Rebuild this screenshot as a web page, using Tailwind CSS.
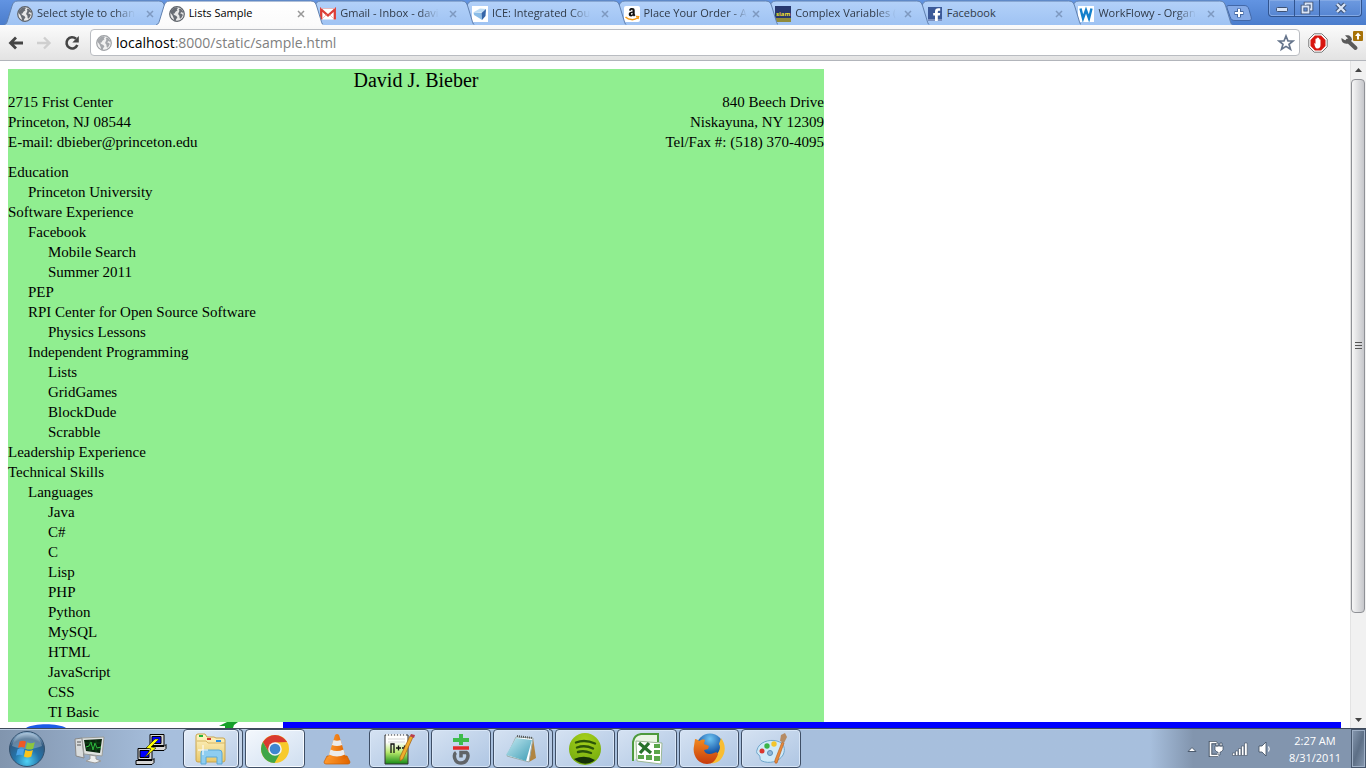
<!DOCTYPE html>
<html lang="en">
<head>
<meta charset="utf-8">
<title>Lists Sample</title>
<script src="https://cdn.jsdelivr.net/npm/@tailwindcss/browser@4"></script>
</head>
<body class="flex h-screen flex-col overflow-hidden bg-white font-['Open_Sans','Noto_Sans',sans-serif] text-black">

<svg class="absolute size-0" aria-hidden="true">
  <defs>
    <linearGradient id="tabFill" x1="0" y1="0" x2="0" y2="1"><stop offset="0" stop-color="#b3d1f9"/><stop offset="1" stop-color="#9fc3f3"/></linearGradient>
    <linearGradient id="activeFill" x1="0" y1="0" x2="0" y2="1"><stop offset="0" stop-color="#ffffff"/><stop offset="1" stop-color="#fbfbfb"/></linearGradient>
    <radialGradient id="orbFill" cx=".5" cy=".85" r=".8"><stop offset="0" stop-color="#4fd2f5"/><stop offset=".45" stop-color="#2474aa"/><stop offset=".8" stop-color="#315a80"/><stop offset="1" stop-color="#8fb0cd"/></radialGradient>
    <linearGradient id="folderFill" x1="0" y1="0" x2="0" y2="1"><stop offset="0" stop-color="#fff6c8"/><stop offset="1" stop-color="#e9c869"/></linearGradient>
    <linearGradient id="coneFill" x1="0" x2="1"><stop offset="0" stop-color="#ff9a2e"/><stop offset="1" stop-color="#e06500"/></linearGradient>
    <linearGradient id="nppFill" x1="0" y1="0" x2="0" y2="1"><stop offset=".25" stop-color="#ffffff"/><stop offset=".6" stop-color="#b6e86a"/><stop offset="1" stop-color="#168a16"/></linearGradient>
    <linearGradient id="padFill" x1="0" y1="0" x2="1" y2="1"><stop offset="0" stop-color="#c5eaf2"/><stop offset="1" stop-color="#3f9db5"/></linearGradient>
    <radialGradient id="spotFill" cx=".5" cy=".2" r=".9"><stop offset="0" stop-color="#a5cf1c"/><stop offset="1" stop-color="#6fa80c"/></radialGradient>
    <radialGradient id="foxGlobe" cx=".5" cy=".2" r=".8"><stop offset="0" stop-color="#6fc4f2"/><stop offset=".6" stop-color="#1d5fae"/><stop offset="1" stop-color="#0d2c6b"/></radialGradient>
    <linearGradient id="foxFill" x1="0" y1="0" x2="0" y2="1"><stop offset="0" stop-color="#f28a1f"/><stop offset="1" stop-color="#c63a0c"/></linearGradient>
    <symbol id="globe" viewBox="0 0 16 16"><circle cx="8" cy="8" r="7.3" fill="#e9e9e9" stroke="#5d6269" stroke-width="1.2"/><path fill="#686d74" d="M2 4.5 5 1.7l3-.5 1 1-1.3 1 .8 1-2 1.6-1 1.6-1.3.3 1 1.4 2.2.8 1 1.6-1.3 1.7-.6 2.5-1.3-.6-.5-2.8L3.400 9.300 1.400 6.700z"/><path fill="#686d74" d="m10.500 2.400 2 .8 2 3-1 .6-1.200-.8-1 1.500 2 .6.4 1.500-1.800 3-1.200-.4-.3-2.400-1.300-1.800.8-2 .6-1.300-.8-1z"/></symbol>
    <symbol id="close" viewBox="0 0 8 8"><path d="m1 1 6 6M7 1 1 7" stroke="currentColor" stroke-width="1.500" fill="none"/></symbol>
    <symbol id="tab" viewBox="0 0 168 25" preserveAspectRatio="none"><path d="M0 25c3-1 3-3 4-6l4-13c1-3 2-5 6-5h141c4 0 5 2 6 5l4 13c1 3 1 5 3 6" stroke="#5f7fae" stroke-width="1"/></symbol>
    <symbol id="amazon" viewBox="0 0 16 16"><rect width="16" height="16" rx="2" fill="#fff"/><path d="M5 4.500C5.200 2.500 6.500 2 8 2c2 0 2.700.8 2.700 2.600v3.200c0 .7.300 1 .7 1.400L10 10.500 9 9.500c-1.500 1.700-4.300 1-4.300-1.300 0-2 1.600-2.600 3.900-2.800 0-1.200 0-1.700-.7-1.700s-.8.500-1 1.100zm3.600 2.200c-1.200.1-1.700.5-1.700 1.400 0 1.200 1.700 1 1.700-.7z" fill="#111"/><path d="M1.500 11c3.500 3.200 8.500 3.400 12 1m-1.500-1.500 2.500.2-.6 2.300" fill="none" stroke="#f59a16" stroke-width="1.500"/></symbol>
  </defs>
</svg>

<!-- Tab strip -->
<header class="relative flex h-[25px] shrink-0 bg-linear-to-b from-[#6294e2] to-[#4b7dcc]">
  <nav aria-label="Tabs" class="ml-1 flex max-w-[1213px] min-w-0 flex-1 text-[11px] text-[#303a48]">
    <div class="relative z-[8] flex min-w-0 flex-1 items-center pt-0.5 pl-[13px]">
      <svg class="absolute top-0 left-0 h-[25px] w-[calc(100%+16px)]" fill="url(#tabFill)"><use href="#tab"/></svg>
      <button class="relative flex min-w-0 flex-1 items-center gap-1"><svg class="size-4 shrink-0"><use href="#globe"/></svg><span class="whitespace-nowrap mask-r-from-80% mask-r-to-100%">Select style to chan</span></button>
      <button aria-label="Close tab" class="relative p-0.5 text-[#7e99c0]"><svg class="size-2"><use href="#close"/></svg></button>
    </div>
    <div class="relative z-[9] flex min-w-0 flex-1 items-center pt-0.5 pl-[13px] text-black">
      <svg class="absolute top-0 left-0 h-[25px] w-[calc(100%+16px)]" fill="url(#activeFill)"><use href="#tab"/></svg>
      <button class="relative flex min-w-0 flex-1 items-center gap-1"><svg class="size-4 shrink-0"><use href="#globe"/></svg><span class="whitespace-nowrap">Lists Sample</span></button>
      <button aria-label="Close tab" class="relative p-0.5 text-[#989898]"><svg class="size-2"><use href="#close"/></svg></button>
    </div>
    <div class="relative z-[7] flex min-w-0 flex-1 items-center pt-0.5 pl-[13px]">
      <svg class="absolute top-0 left-0 h-[25px] w-[calc(100%+16px)]" fill="url(#tabFill)"><use href="#tab"/></svg>
      <button class="relative flex min-w-0 flex-1 items-center gap-1"><svg class="size-4 shrink-0" viewBox="0 0 16 16"><path fill="#fff" d="M0 2.500h16v11H0z"/><path d="M1.200 13.500V3.500L8 9.500l6.800-6v10" fill="none" stroke="#dc3d36" stroke-width="2.300"/><path d="M2 13l4.500-4.500M14 13 9.500 8.500M1 2.500h14" stroke="#e9a5a2" stroke-width=".7"/></svg><span class="whitespace-nowrap mask-r-from-80% mask-r-to-100%">Gmail - Inbox - davi</span></button>
      <button aria-label="Close tab" class="relative p-0.5 text-[#7e99c0]"><svg class="size-2"><use href="#close"/></svg></button>
    </div>
    <div class="relative z-[6] flex min-w-0 flex-1 items-center pt-0.5 pl-[13px]">
      <svg class="absolute top-0 left-0 h-[25px] w-[calc(100%+16px)]" fill="url(#tabFill)"><use href="#tab"/></svg>
      <button class="relative flex min-w-0 flex-1 items-center gap-1"><svg class="size-4 shrink-0" viewBox="0 0 16 16"><path fill="#fff" d="M0 0h16v16H0z"/><path d="m2 6 6-3.500L14 3l-4 3.500H2z" fill="#bcdcf5"/><path d="m1.500 6.500 8 .5.500 7-3-2-5-3z" fill="#8bbde8"/><path d="m9.500 7 4.500-4-.5 7L10 14z" fill="#3565a8"/></svg><span class="whitespace-nowrap mask-r-from-80% mask-r-to-100%">ICE: Integrated Cou</span></button>
      <button aria-label="Close tab" class="relative p-0.5 text-[#7e99c0]"><svg class="size-2"><use href="#close"/></svg></button>
    </div>
    <div class="relative z-[5] flex min-w-0 flex-1 items-center pt-0.5 pl-[13px]">
      <svg class="absolute top-0 left-0 h-[25px] w-[calc(100%+16px)]" fill="url(#tabFill)"><use href="#tab"/></svg>
      <button class="relative flex min-w-0 flex-1 items-center gap-1"><svg class="size-4 shrink-0"><use href="#amazon"/></svg><span class="whitespace-nowrap mask-r-from-85% mask-r-to-100%">Place Your Order - A</span></button>
      <button aria-label="Close tab" class="relative p-0.5 text-[#7e99c0]"><svg class="size-2"><use href="#close"/></svg></button>
    </div>
    <div class="relative z-[4] flex min-w-0 flex-1 items-center pt-0.5 pl-[13px]">
      <svg class="absolute top-0 left-0 h-[25px] w-[calc(100%+16px)]" fill="url(#tabFill)"><use href="#tab"/></svg>
      <button class="relative flex min-w-0 flex-1 items-center gap-1"><span class="flex size-4 shrink-0 items-center justify-center bg-linear-to-b from-[#27376d] from-75% to-[#8f8a3a] to-75% text-[6px] leading-3 font-bold text-[#f0df2a]">siam</span><span class="whitespace-nowrap mask-r-from-80% mask-r-to-100%">Complex Variables (</span></button>
      <button aria-label="Close tab" class="relative p-0.5 text-[#7e99c0]"><svg class="size-2"><use href="#close"/></svg></button>
    </div>
    <div class="relative z-[3] flex min-w-0 flex-1 items-center pt-0.5 pl-[13px]">
      <svg class="absolute top-0 left-0 h-[25px] w-[calc(100%+16px)]" fill="url(#tabFill)"><use href="#tab"/></svg>
      <button class="relative flex min-w-0 flex-1 items-center gap-1"><svg class="size-4 shrink-0" viewBox="0 0 16 16"><path fill="#3b5998" d="M1 1h14v14H1z"/><path fill="#7b90bf" d="M1 13h14v2H1z"/><path fill="#fff" d="M8 15V9.500H6.200V7H8V5.500C8 3.200 9.300 2.200 11.200 2.200h2v2.500H12c-.9 0-1.200.4-1.200 1.200V7h2.400l-.4 2.500h-2V15z"/></svg><span class="whitespace-nowrap">Facebook</span></button>
      <button aria-label="Close tab" class="relative p-0.5 text-[#7e99c0]"><svg class="size-2"><use href="#close"/></svg></button>
    </div>
    <div class="relative z-[2] flex min-w-0 flex-1 items-center pt-0.5 pl-[13px]">
      <svg class="absolute top-0 left-0 h-[25px] w-[calc(100%+16px)]" fill="url(#tabFill)"><use href="#tab"/></svg>
      <button class="relative flex min-w-0 flex-1 items-center gap-1"><svg class="size-4 shrink-0" viewBox="0 0 16 16"><path fill="#fff" d="M0 0h16v16H0z"/><path d="m2.500 2.500 2.500 10L8 4l3 8.500 2.500-10" fill="none" stroke="#1480cb" stroke-width="2.400"/></svg><span class="whitespace-nowrap mask-r-from-80% mask-r-to-100%">WorkFlowy - Organ</span></button>
      <button aria-label="Close tab" class="relative p-0.5 text-[#7e99c0]"><svg class="size-2"><use href="#close"/></svg></button>
    </div>
  </nav>
  <button aria-label="New tab" class="mt-[5px] ml-[9px] h-4 w-[26px] shrink-0"><svg viewBox="0 0 26 16" class="h-4 w-[26px]"><path d="M3 .5h15c3 0 4 1 5 4l2 7c1 3 0 4-2 4H9c-3 0-4-1-5-4L1 3C.5 1 1 .5 3 .5z" fill="#84a9e6" stroke="#4268a8"/><path d="M13 3.500v9M8.500 8h9" stroke="#46689f" stroke-width="4"/><path d="M13 4v8M9 8h8" stroke="#fff" stroke-width="2"/></svg></button>
  <div class="mr-1 ml-auto flex h-[17px] shrink-0 divide-x divide-[#31548f] rounded-b border border-t-0 border-[#31548f] bg-linear-to-b from-[#6d9ae0] to-[#5585d2] shadow-[inset_0_0_0_1px_#83a9e5]">
    <button aria-label="Minimize" class="flex w-[26px] items-center justify-center"><svg class="h-3 w-4" viewBox="0 0 16 12"><rect x="2.500" y="5.500" width="11" height="4" rx="1" fill="#d9e5f8" stroke="#3d5174"/></svg></button>
    <button aria-label="Restore" class="flex w-[25px] items-center justify-center"><svg class="size-[14px]" viewBox="0 0 14 14" fill="none"><path d="M5.500 4V2.500h6v6H10M2.500 5.500h6v6h-6z" stroke="#3d5174" stroke-width="3.600"/><path d="M5.500 4V2.500h6v6H10M2.500 5.500h6v6h-6z" stroke="#d9e5f8" stroke-width="1.800"/></svg></button>
    <button aria-label="Close" class="flex w-[41px] items-center justify-center"><svg class="h-3 w-4" viewBox="0 0 16 12"><path d="m4 2 8 8M12 2 4 10" stroke="#3d5174" stroke-width="4.500"/><path d="m4 2 8 8M12 2 4 10" stroke="#d9e5f8" stroke-width="2.400"/></svg></button>
  </div>
</header>

<!-- Toolbar -->
<div class="flex h-9 shrink-0 items-center border-b border-[#b2b5bb] bg-linear-to-b from-[#fbfbfb] to-[#e3e3e3] pr-0.5 pl-2">
  <button aria-label="Back" class="mr-3 w-4"><svg class="size-4" viewBox="0 0 16 16" fill="none" stroke="#454545" stroke-width="2.800"><path d="M2.500 8H15M8 2.500 2.500 8 8 13.500"/></svg></button>
  <button aria-label="Forward" class="mr-3 w-4"><svg class="size-4" viewBox="0 0 16 16" fill="none" stroke="#cfcfcf" stroke-width="2.400"><path d="M13.500 8H1M8 2.500 13.500 8 8 13.500"/></svg></button>
  <button aria-label="Reload" class="mr-2.5 w-4"><svg class="size-4" viewBox="0 0 16 16"><path d="M12 3.800A5.600 5.600 0 1 0 13.300 10" fill="none" stroke="#454545" stroke-width="2.600"/><path d="M14.800 1v6.500H8.300z" fill="#454545"/></svg></button>
  <label class="flex h-[27px] min-w-0 flex-1 items-center gap-1 rounded border border-[#b9bcc1] bg-white pr-1 pl-[5px]">
    <svg class="size-4 shrink-0 opacity-60"><use href="#globe"/></svg>
    <span class="relative min-w-0 flex-1 text-sm leading-5">
      <input aria-label="Address" value="localhost:8000/static/sample.html" class="block w-full text-[#808080] outline-none">
      <span aria-hidden="true" class="pointer-events-none absolute top-0 left-0 bg-white">localhost</span>
    </span>
    <svg class="size-[18px] shrink-0" viewBox="0 0 18 18"><path d="m9 2 2 5h5l-4 3.300 1.500 5L9 12.400l-4.500 2.900 1.500-5L2 7h5z" fill="#fff" stroke="#66758c" stroke-width="1.700"/></svg>
  </label>
  <button aria-label="AdBlock" class="ml-2 w-5"><svg class="size-5" viewBox="0 0 20 20"><path d="M6.200.8h7.600l5.400 5.400v7.600l-5.400 5.400H6.200L.8 13.800V6.200z" fill="#fff" stroke="#777"/><path d="M6.900 2.500h6.200l4.400 4.400v6.200l-4.400 4.400H6.900l-4.400-4.400V6.900z" fill="#d8160f"/><path d="M6.200 10.500c.6-.4 1.100 0 1.300.6V6c0-.8 1.100-.8 1.200 0V5c.1-.8 1.200-.8 1.200 0v.3c.2-.7 1.300-.6 1.300.2V6.600c.3-.6 1.300-.5 1.300.3V12c0 2.200-1 3.500-3 3.500-1.700 0-2.400-1-3.300-5z" fill="#fff"/></svg></button>
  <button aria-label="Settings" class="ml-3 w-6"><svg class="h-6 w-6" viewBox="0 0 24 24"><path d="m7.500 9.500 8 7.500" stroke="#5a5a5a" stroke-width="4" stroke-linecap="round"/><path d="M5 4.500 8.200 7.500 7 9.500 4.500 9 1.500 7C1 11 4 13.500 8 12.500l4-3.500c0-3.500-3-5.800-7-4.500z" fill="#5a5a5a"/><rect x="13" y="0" width="10" height="10" rx="1" fill="#a77208"/><path d="M18 1.500 21 5h-2v3.500h-2V5h-2z" fill="#fff"/></svg></button>
</div>

<!-- Web page -->
<div class="flex min-h-0 flex-1 bg-white">
  <main id="page" class="flex min-w-0 flex-1 flex-col overflow-hidden pt-2 font-['Liberation_Serif',serif]">
    <article class="ml-2 min-h-0 w-[816px] max-w-full flex-1 bg-[#90ee90] text-[15px] leading-5">
      <h1 class="text-center text-xl leading-[23px]">David J. Bieber</h1>
      <div class="flex justify-between">
        <address class="not-italic">2715 Frist Center<br>Princeton, NJ 08544<br>E-mail: dbieber@princeton.edu</address>
        <address class="text-right not-italic">840 Beech Drive<br>Niskayuna, NY 12309<br>Tel/Fax #: (518) 370-4095</address>
      </div>
      <ul class="mt-2.5">
        <li>Education
          <ul class="pl-5"><li>Princeton University</li></ul></li>
        <li>Software Experience
          <ul class="pl-5">
            <li>Facebook
              <ul class="pl-5"><li>Mobile Search</li><li>Summer 2011</li></ul></li>
            <li>PEP</li>
            <li>RPI Center for Open Source Software
              <ul class="pl-5"><li>Physics Lessons</li></ul></li>
            <li>Independent Programming
              <ul class="pl-5"><li>Lists</li><li>GridGames</li><li>BlockDude</li><li>Scrabble</li></ul></li>
          </ul></li>
        <li>Leadership Experience</li>
        <li>Technical Skills
          <ul class="pl-5">
            <li>Languages
              <ul class="pl-5"><li>Java</li><li>C#</li><li>C</li><li>Lisp</li><li>PHP</li><li>Python</li><li>MySQL</li><li>HTML</li><li>JavaScript</li><li>CSS</li><li>TI Basic</li></ul></li>
          </ul></li>
      </ul>
    </article>
    <div class="flex h-1.5 shrink-0 pr-[9px]">
      <svg class="h-1.5 w-[283px] shrink-0" viewBox="0 0 283 6"><path d="M26 6c8-5 32-5 40 0z" fill="#1d5be8"/><path d="m219 4 8-4h11l-4 3-1 3h-8v-2z" fill="#16a02a"/></svg>
      <div class="flex-1 bg-[#0000ff]"></div>
    </div>
  </main>
  <div class="flex w-4 shrink-0 flex-col border-l border-[#e3e3e3] bg-[#f1f1f1] pr-px" role="scrollbar" aria-controls="page" aria-valuenow="0">
    <button aria-label="Scroll up" class="flex h-[18px] shrink-0 items-center justify-center"><svg class="h-1 w-[7px]" viewBox="0 0 7 4"><path d="M0 4 3.500 0 7 4z" fill="#444"/></svg></button>
    <div class="flex h-4/5 items-center justify-center rounded-sm border border-[#8f9196] bg-linear-to-r from-[#f7f7f7] to-[#c6c7cb]">
      <svg class="size-[7px]" viewBox="0 0 7 7"><path d="M0 .5h7M0 3.500h7M0 6.500h7" stroke="#555"/></svg>
    </div>
    <button aria-label="Scroll down" class="mt-auto flex h-[17px] shrink-0 items-center justify-center"><svg class="h-1 w-[7px]" viewBox="0 0 7 4"><path d="M0 0h7L3.500 4z" fill="#444"/></svg></button>
  </div>
</div>

<!-- Taskbar -->
<footer class="flex h-10 shrink-0 border-t border-[#3f4a5a] bg-linear-to-r from-[#8195ae] from-0% via-[#a7bfdd] via-12% to-[#a7bfdd] to-85% shadow-[inset_0_1px_0_#b9cbe2]">
  <button aria-label="Start" class="flex w-[59px] shrink-0 items-center pl-2"><svg class="size-[38px]" viewBox="0 0 38 38"><circle cx="19" cy="19" r="17.500" fill="url(#orbFill)" stroke="#32506d"/><path d="M4 16C6 6 13 3 19 3s13 3 15 13c-9 4-21 4-30 0z" fill="#fff" opacity=".25"/><path d="M11.500 11.500c2.500-1.300 4.700-1 6.500 0l-1.500 6.300c-2-1-4-1-6.500 0z" fill="#ee5a24"/><path d="M19.200 12.200c2.500 1.300 5 1.200 7.600 0l-1.600 6.500c-2.500 1.200-5 1.200-7.500 0z" fill="#8cc63f"/><path d="M9.600 19.200c2.500-1.200 4.500-1 6.600 0l-1.500 6.300c-2-1-4.200-1-6.600 0z" fill="#4aa3e8"/><path d="M17.400 20c2.500 1.300 5 1.200 7.500 0l-1.600 6.500c-2.500 1.200-5 1.200-7.400 0z" fill="#fcc419"/></svg></button>
  <nav aria-label="Taskbar" class="flex min-w-0 gap-0.5 overflow-hidden">
    <button aria-label="System monitor" class="flex w-[60px] shrink-0 items-center justify-center"><svg class="size-8" viewBox="0 0 32 32"><path d="m2 6 7-1 2 20-8-2z" fill="#d9dcdc" stroke="#888"/><path d="M4 9h4M4 12h4" stroke="#555"/><path d="M9 5 31 4l-2 19-18-2z" fill="#dfe2e0" stroke="#9a9d9a"/><path d="m11 7 18-1-2 14-14-2z" fill="#09240d"/><path d="m13 14 3-1 2-4 2 8 2-7 2 5 4-1" fill="none" stroke="#32c943"/><path d="M12 10h16M13 16h15M17 7v11M23 7v12" stroke="#176923" stroke-width=".5"/><path d="m17 22 6 1v3l5 2-6 2-9-2 4-2z" fill="#eceeed" stroke="#999"/></svg></button>
    <button aria-label="PuTTY" class="flex w-[60px] shrink-0 items-center justify-center"><svg class="size-8" viewBox="0 0 32 32"><g id="pc" stroke="#000"><path d="M15 1.500h14v11H15z" fill="#d5d5d5"/><path d="M17 3.500h9v7h-9z" fill="#00f"/><path d="M13 13.500h16l2-2v4l-2 2H13z" fill="#d5d5d5"/></g><use href="#pc" x="-12" y="14"/><path d="m20 6-9 9 5 1-7 9 12-10-5-1 8-8z" fill="#ff0" stroke="#000" stroke-width=".5"/></svg></button>
    <div class="flex w-[60px] shrink-0">
      <button aria-label="Explorer" class="flex w-14 items-center justify-center rounded-sm border border-[#3f4f66] bg-linear-to-br from-[#e4edf8] to-[#b8cce6] shadow-[inset_0_0_0_1px_#eaf2fc]"><svg class="size-8" viewBox="0 0 32 32"><path d="M1 3q0-2 2-2h7l2 3h7l2 1h7q2 0 2 2v20q0 2-2 2H3q-2 0-2-2z" fill="url(#folderFill)" stroke="#c9a44c"/><path d="M4 2h4v2H4z" fill="#23b33a"/><path d="M12 5h4v2h-4z" fill="#d5342c"/><path d="M21 7h5v2h-5z" fill="#2c8ee0"/><path d="M2 8h9l2 2h17" fill="none" stroke="#d7b663"/><path d="M6 31V20q0-3 3-3h15q3 0 3 3v11h-5v-7H11v7z" fill="#8ecdf0" stroke="#5ba8d6"/><path d="M8 12v10M3 17h10" stroke="#fff"/></svg></button>
      <span class="w-1 rounded-r-sm border border-l-0 border-[#3f4f66] bg-[#c4d4e9]"></span>
    </div>
    <button aria-label="Chrome" class="flex w-[60px] shrink-0 items-center justify-center rounded-sm border border-[#3f4f66] bg-linear-to-br from-[#f4f8fd] to-[#cfdef0] shadow-[inset_0_0_0_1px_#f7fbff]"><svg class="size-[30px]" viewBox="0 0 30 30"><circle cx="15" cy="15" r="14" fill="#f7ca2c"/><path d="M2.900 8A14 14 0 0 1 27.100 8L15 8.500 9 18.500z" fill="#d93a30"/><path d="M2.900 8A14 14 0 0 0 14.500 29l6-10.500H9z" fill="#3fa648"/><circle cx="15" cy="15" r="6.800" fill="#f4f4f4"/><circle cx="15" cy="15" r="5.300" fill="#3f86d0"/></svg></button>
    <button aria-label="VLC" class="flex w-[60px] shrink-0 items-center justify-center"><svg class="size-8" viewBox="0 0 32 32"><path d="M6 23h20l3 6q0 2-2 2H5q-2 0-2-2z" fill="url(#coneFill)" stroke="#c55b00" stroke-width=".7"/><path d="M14 2q2-2 4 0l7 23q-9 5-18 0z" fill="url(#coneFill)"/><path d="m12.500 7-1.600 5q5 2 10.200 0l-1.600-5q-3.500 1.500-7 0zM9.500 16.500 8 21.500q8 4 16 0l-1.500-5q-6.500 3-13 0z" fill="#ececec"/></svg></button>
    <button aria-label="Notepad++" class="flex w-[60px] shrink-0 items-center justify-center rounded-sm border border-[#3f4f66] bg-linear-to-br from-[#d5e2f2] to-[#afc6e3] shadow-[inset_0_0_0_1px_#d8e6f7]"><svg class="size-8" viewBox="0 0 32 32"><path d="M2 2h23v29H2z" fill="url(#nppFill)" stroke="#333"/><path d="M3 2h21" stroke="#eee" stroke-width="2" stroke-dasharray="2 1"/><path d="M5 6h17M5 9h17" stroke="#bbb" stroke-width=".6"/><path d="M8 20v-9h3v9M13 15h5m-2.500-2.500v5M19 15h5m-2.500-2.500v5" stroke="#111" fill="none" stroke-width="1.300"/><path d="m27 3 3 1-10 22-3 2 0-4z" fill="#f0ad2c" stroke="#a35e12" stroke-width=".7"/><path d="m27 3 1-2 4 1-1 3z" fill="#b93d4c"/></svg></button>
    <button aria-label="Git" class="flex w-[60px] shrink-0 items-center justify-center rounded-sm border border-[#3f4f66] bg-linear-to-br from-[#d5e2f2] to-[#afc6e3] shadow-[inset_0_0_0_1px_#d8e6f7]"><svg class="size-8" viewBox="0 0 32 32" fill="none"><path d="M8 7h16M16 1v11" stroke="#3ebc4c" stroke-width="4"/><path d="M8 15h16" stroke="#e22a2a" stroke-width="3.500"/><path d="M11 19.500C8.500 21 8.500 30 16 30s8-9 5.500-10.500H16v5" stroke="#606468" stroke-width="3.500"/></svg></button>
    <div class="flex w-[60px] shrink-0">
      <button aria-label="Notepad" class="flex w-14 items-center justify-center rounded-sm border border-[#3f4f66] bg-linear-to-br from-[#d5e2f2] to-[#afc6e3] shadow-[inset_0_0_0_1px_#d8e6f7]"><svg class="size-8" viewBox="0 0 32 32"><path d="m28 5 3 20-7 4z" fill="#b08542"/><path d="m11 4 17 1-4 24-22-6z" fill="#fff" stroke="#9aa"/><path d="m11 5 16 2-6 21-20-6z" fill="url(#padFill)"/><path d="m12 3 15 2" stroke="#555" stroke-width="2" stroke-dasharray="1 1"/></svg></button>
      <span class="w-1 rounded-r-sm border border-l-0 border-[#3f4f66] bg-[#b6cae4]"></span>
    </div>
    <button aria-label="Spotify" class="flex w-[60px] shrink-0 items-center justify-center rounded-sm border border-[#3f4f66] bg-linear-to-br from-[#d5e2f2] to-[#afc6e3] shadow-[inset_0_0_0_1px_#d8e6f7]"><svg class="size-8" viewBox="0 0 32 32"><circle cx="16" cy="16" r="16" fill="url(#spotFill)"/><path d="M7 9.500q9-3.500 19 1M8 14.500q8-3 16 1M9 19q6-2 13 1" fill="none" stroke="#2b5409" stroke-width="2.400" stroke-linecap="round"/><path d="M5 26q11-5 21 1-10 8-21-1z" fill="#163208"/></svg></button>
    <button aria-label="Excel" class="flex w-[60px] shrink-0 items-center justify-center rounded-sm border border-[#3f4f66] bg-linear-to-br from-[#d5e2f2] to-[#afc6e3] shadow-[inset_0_0_0_1px_#d8e6f7]"><svg class="size-8" viewBox="0 0 32 32"><path d="M2 28V9q1-7 8-8h17v8" fill="#eaf5e5" stroke="#4d9a3c" stroke-width="2"/><path d="m5 8 26 2-1 21-24-3z" fill="#fff" stroke="#9bb894"/><path d="M23 11h6v4h-6zM23 17h6v4h-6zM23 23h6v5h-6zM15 22h6v5h-6zM7 22h6v4H7z" fill="#5aa64a"/><path d="m8 10 12 10M18 10 9 20" stroke="#28722a" stroke-width="3.300"/></svg></button>
    <button aria-label="Firefox" class="flex w-[60px] shrink-0 items-center justify-center rounded-sm border border-[#3f4f66] bg-linear-to-br from-[#d5e2f2] to-[#afc6e3] shadow-[inset_0_0_0_1px_#d8e6f7]"><svg class="size-8" viewBox="0 0 32 32"><circle cx="17" cy="14" r="13.500" fill="url(#foxGlobe)"/><path d="M28 5c5 6 5 15 0 21-3 4-8 5-12 4l6-7c5-4 6-9 4-12z" fill="#f9bd32"/><path d="M2 6c2 0 3 1 4 2 2-1 4-2 6-1l-1 4 5 2-1 3-4 1c1 4 5 5 10 3 2-1 3-1 4 1-2 6-5 10-11 10C5 31-1 22 1 13z" fill="url(#foxFill)"/></svg></button>
    <button aria-label="Paint" class="flex w-[60px] shrink-0 items-center justify-center rounded-sm border border-[#3f4f66] bg-linear-to-br from-[#d5e2f2] to-[#afc6e3] shadow-[inset_0_0_0_1px_#d8e6f7]"><svg class="size-8" viewBox="0 0 32 32"><path d="M2 17C4 9 14 6 22 8c7 2 9 8 6 14-4 7-14 9-21 6-3-1-1-4-3-6-2-1-3-3-2-5z" fill="#cfe9f8" stroke="#6da5cb"/><circle cx="7" cy="18" r="2.500" fill="#d9362e"/><circle cx="12" cy="13" r="2.700" fill="#39b449"/><circle cx="19" cy="11" r="2.700" fill="#f3c52b"/><circle cx="15" cy="20" r="2.500" fill="#8fb9da" stroke="#5a8db5"/><path d="m27 9 2 1-7 20q-3 1-2-3z" fill="#e8883a" stroke="#b05b1b" stroke-width=".6"/><path d="m25 8 1-6 4-2 2 4-3 6z" fill="#b58b64"/></svg></button>
  </nav>
  <div class="ml-auto flex w-[216px] shrink-0 items-center bg-linear-to-r from-transparent to-[#8295ae] to-20% text-white">
    <button aria-label="Show hidden icons" class="ml-9 w-4"><svg class="h-2 w-3" viewBox="0 0 12 8"><path d="m2 6.500 4-4 4 4z" fill="#fff" stroke="#4c5b6e"/></svg></button>
    <button aria-label="Power" class="ml-1.5 w-4"><svg class="size-4" viewBox="0 0 16 16"><path d="M9 1.500H2.500v13H10" fill="none" stroke="#3e4c5e" stroke-width="3.500"/><path d="M9 1.500H2.500v13H10V12" fill="none" stroke="#fff" stroke-width="1.700"/><path d="M7 5h8v4l-2 2h-1v3h-2v-3H9L7 9zM8 2h2v3H8zM12 2h2v3h-2z" fill="#fff" stroke="#3e4c5e" stroke-width=".7"/></svg></button>
    <button aria-label="Network" class="ml-2 w-4"><svg class="size-4" viewBox="0 0 16 16" fill="#fff" stroke="#3e4c5e" stroke-width=".6"><path d="M.5 12h2.400v2.500H.5zM3.500 10h2.400v4.500H3.500zM6.500 7.500h2.400v7H6.500zM9.500 5h2.400v9.500H9.500zM12.500 2h2.700v12.500h-2.700z"/></svg></button>
    <button aria-label="Volume" class="ml-2.5 w-4"><svg class="size-4" viewBox="0 0 16 16"><path d="M1 5h3l4-4v14l-4-4H1z" fill="#fff" stroke="#3e4c5e" stroke-width=".8"/><path d="M10.500 5.500q1.500 2.500 0 5" fill="none" stroke="#fff" stroke-width="1.200"/></svg></button>
    <button class="ml-auto mr-2.5 text-center text-[11px] leading-[17px]"><time datetime="2011-08-31T02:27">2:27 AM<br>8/31/2011</time></button>
    <button aria-label="Show desktop" class="w-[15px] self-stretch border border-[#46566c] bg-linear-to-br from-[#8799b0] via-[#5d6f86] via-50% to-[#8799b0] shadow-[inset_0_0_0_1px_#9fb0c6]"></button>
  </div>
</footer>
</body>
</html>
